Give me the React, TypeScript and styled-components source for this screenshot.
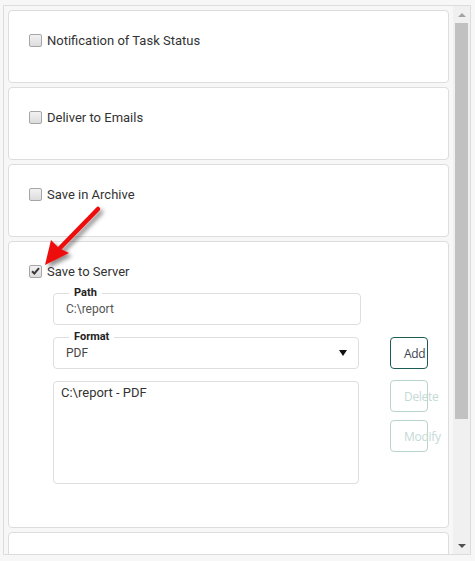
import React from "react";
import styled, { createGlobalStyle } from "styled-components";

const Global = createGlobalStyle`
  html, body { margin: 0; padding: 0; background: #f7f7f7; }
  body { font-family: Roboto, "Liberation Sans", Arial, sans-serif; }
`;

const Frame = styled.div`
  position: relative;
  margin: 5px 0 0 3px;
  width: 468px;
  height: 550px;
  box-sizing: border-box;
  border: 1px solid #dcdcdc;
  background: #f7f7f7;
  display: flex;
`;

const Content = styled.div`
  flex: 1;
  min-width: 0;
  padding: 4px 4px 0 4px;
  overflow: hidden;
  display: flex;
  flex-direction: column;
  gap: 4px;
`;

const Card = styled.div<{ $tall?: boolean }>`
  flex: none;
  background: #fff;
  border: 1px solid #dddddd;
  border-radius: 4px;
  box-sizing: border-box;
  height: ${(p) => (p.$tall ? "287px" : "73px")};
  padding: 21px 20px 0 20px;
`;

const CheckRow = styled.label`
  display: flex;
  align-items: center;
  gap: 5px;
  height: 16px;
  font-size: 13px;
  color: #333;
`;

const Box = styled.span<{ $on?: boolean }>`
  width: 13px;
  height: 13px;
  box-sizing: border-box;
  border: 1px solid #a6a6a6;
  border-radius: 2px;
  background: linear-gradient(#f2f2f2, #dcdcdc);
  display: flex;
  align-items: center;
  justify-content: center;
`;

const Form = styled.div`
  margin: 14px 0 0 24px;
  display: grid;
  grid-template-columns: 306px 38px;
  column-gap: 31px;
  row-gap: 12px;
`;

const Field = styled.div<{ $wide?: boolean }>`
  position: relative;
  width: ${(p) => (p.$wide ? "308px" : "auto")};
  height: 32px;
  box-sizing: border-box;
  border: 1px solid #dedede;
  border-radius: 4px;
  display: flex;
  align-items: center;
  padding: 0 10px 0 12px;
  font-size: 12px;
  color: #555;
`;

const Legend = styled.span`
  position: absolute;
  top: -8px;
  left: 15px;
  padding: 0 5px;
  background: #fff;
  font-size: 11px;
  font-weight: 700;
  color: #222;
  line-height: 14px;
`;

const FieldValue = styled.span<{ $dark?: boolean }>`
  flex: 1;
  color: ${(p) => (p.$dark ? "#444" : "#555")};
`;

const Caret = styled.span`
  width: 0;
  height: 0;
  border-left: 4.5px solid transparent;
  border-right: 4.5px solid transparent;
  border-top: 6px solid #111;
  margin-right: 1px;
`;

const ListBox = styled.div`
  height: 103px;
  box-sizing: border-box;
  border: 1px solid #dedede;
  border-radius: 4px;
  padding: 3px 7px;
  font-size: 13px;
  color: #333;
  line-height: 16px;
`;

const ButtonCol = styled.div`
  display: flex;
  flex-direction: column;
  gap: 8px;
  margin-top: -1px;
`;

const Btn = styled.button<{ $active?: boolean }>`
  width: 38px;
  height: 32px;
  box-sizing: border-box;
  padding: 0 0 0 13px;
  text-align: left;
  white-space: nowrap;
  overflow: visible;
  background: #fff;
  border: 1px solid ${(p) => (p.$active ? "#1d5c52" : "#b9d4cf")};
  border-radius: 4px;
  font-family: "Open Sans", "Noto Sans", sans-serif;
  font-size: 12px;
  letter-spacing: -0.3px;
  color: ${(p) => (p.$active ? "#3b4350" : "#c3dad6")};
`;

const ScrollBar = styled.div`
  width: 17px;
  flex: none;
  background: #f0f0f0;
  display: flex;
  flex-direction: column;
`;

const ScrollBtn = styled.div`
  height: 17px;
  display: flex;
  align-items: center;
  justify-content: center;
`;

const Tri = styled.span<{ $down?: boolean }>`
  width: 0;
  height: 0;
  border-left: 4px solid transparent;
  border-right: 4px solid transparent;
  ${(p) =>
    p.$down
      ? "border-top: 4px solid #505050;"
      : "border-bottom: 4px solid #a3a3a3;"}
`;

const Track = styled.div`
  flex: 1;
  padding: 0 2px;
`;

const Thumb = styled.div`
  height: 396px;
  background: #c1c1c1;
`;

const ArrowSvg = styled.svg`
  position: absolute;
  left: 30px;
  top: 195px;
  overflow: visible;
  pointer-events: none;
`;

function Check({ label, on }: { label: string; on?: boolean }) {
  return (
    <CheckRow>
      <Box $on={on}>
        {on && (
          <svg width="9" height="8" viewBox="0 0 9 8">
            <path d="M1 4.2 L3.4 6.5 L8 1.2" fill="none" stroke="#3a3a3a" strokeWidth="2" />
          </svg>
        )}
      </Box>
      {label}
    </CheckRow>
  );
}

export default function App() {
  return (
    <>
      <Global />
      <Frame>
        <Content>
          <Card>
            <Check label="Notification of Task Status" />
          </Card>
          <Card>
            <Check label="Deliver to Emails" />
          </Card>
          <Card>
            <Check label="Save in Archive" />
          </Card>
          <Card $tall>
            <Check label="Save to Server" on />
            <Form>
              <Field $wide>
                <Legend>Path</Legend>
                <FieldValue>C:\report</FieldValue>
              </Field>
              <div />
              <Field>
                <Legend>Format</Legend>
                <FieldValue $dark>PDF</FieldValue>
                <Caret />
              </Field>
              <Btn $active>Add</Btn>
              <ListBox>C:\report - PDF</ListBox>
              <ButtonCol>
                <Btn>Delete</Btn>
                <Btn>Modify</Btn>
              </ButtonCol>
            </Form>
          </Card>
          <Card />
        </Content>
        <ScrollBar>
          <ScrollBtn>
            <Tri />
          </ScrollBtn>
          <Track>
            <Thumb />
          </Track>
          <ScrollBtn>
            <Tri $down />
          </ScrollBtn>
        </ScrollBar>
        <ArrowSvg width="80" height="75" viewBox="0 0 80 75">
          <defs>
            <filter id="sh" x="-30%" y="-30%" width="160%" height="160%">
              <feDropShadow dx="3" dy="3" stdDeviation="2" floodColor="#000" floodOpacity="0.45" />
            </filter>
          </defs>
          <g filter="url(#sh)">
            <line x1="64" y1="8" x2="26" y2="47" stroke="#ee1111" strokeWidth="4.5" strokeLinecap="round" />
            <polygon points="11,64 17,39 25,47 35,52" fill="#ee1111" />
          </g>
        </ArrowSvg>
      </Frame>
    </>
  );
}
